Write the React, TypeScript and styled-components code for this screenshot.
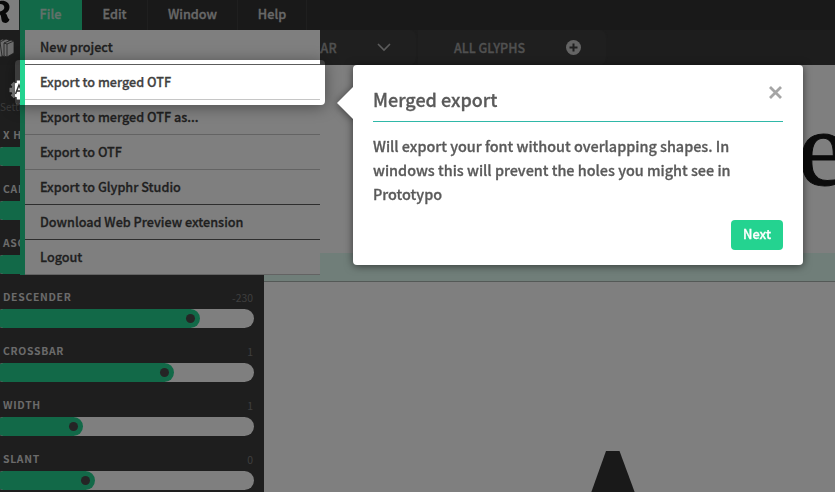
import React from "react";
import styled, { createGlobalStyle } from "styled-components";

const Global = createGlobalStyle`
  * { box-sizing: border-box; }
  html, body { margin: 0; padding: 0; overflow: hidden; }
  body { font-family: "Noto Sans CJK JP", "Noto Sans", sans-serif; font-weight: 500; background: #fff; }
`;

const Screen = styled.div`
  position: relative;
  display: flex;
  flex-direction: column;
  width: 835px;
  height: 492px;
  overflow: hidden;
  background: #fff;
  -webkit-text-stroke: 0.3px currentColor;
`;

const TopBar = styled.header`
  display: flex;
  flex: none;
  height: 30px;
  background: #333;
`;

const LogoBox = styled.div`
  width: 20px;
  height: 30px;
  background: #fdfdfd;
  border-right: 1px solid #2c4a3e;
`;

const MenuTitle = styled.div<{ $width: number; $active?: boolean }>`
  width: ${(p) => p.$width}px;
  height: 30px;
  line-height: 27px;
  text-align: center;
  font-size: 12.7px;
  color: ${(p) => (p.$active ? "#c4e2d5" : "#d0d0d0")};
  background: ${(p) => (p.$active ? "#24d390" : "transparent")};
  border-right: 1px solid ${(p) => (p.$active ? "#24d390" : "#3f3f3f")};
`;

const Toolbar = styled.div`
  display: flex;
  flex: none;
  height: 35px;
  background: #3a3a3a;
  color: #a0a0a0;
  font-size: 12.5px;
  line-height: 38px;
`;

const LibraryCell = styled.div`
  width: 20px;
  height: 35px;
`;

const Tab = styled.div<{ $width: number }>`
  display: flex;
  align-items: center;
  justify-content: space-between;
  width: ${(p) => p.$width}px;
  height: 35px;
  padding: 0 25px 0 36px;
  background: #3e3e3e;
  border-right: 2px solid #3a3a3a;
  border-radius: 0 8px 8px 0;
  svg { display: block; }
`;

const FamilyName = styled.span`
  margin-left: 224px;
`;

const Main = styled.div`
  display: flex;
  flex: 1;
  min-height: 0;
`;

const Side = styled.aside`
  flex: none;
  width: 264px;
  background: #3c3c3c;
`;

const Settings = styled.div`
  height: 62px;
  padding-top: 15px;
  font-size: 10px;
  line-height: 12px;
  font-weight: 400;
  color: #777;
  white-space: nowrap;
  overflow: hidden;
  -webkit-text-stroke: 0;
  svg { display: block; margin: 0 0 1px 9px; }
`;

const SliderBlock = styled.div`
  height: 54px;
  width: 254px;
`;

const SliderHead = styled.div`
  display: flex;
  justify-content: space-between;
  height: 20px;
  padding: 0 0 0 3px;
  line-height: 16px;
  font-size: 10.4px;
  font-weight: 700;
  letter-spacing: 0.7px;
  color: #d6d6d6;
  -webkit-text-stroke: 0;
`;

const SliderValue = styled.span`
  font-size: 10.4px;
  font-weight: 400;
  letter-spacing: 0;
  line-height: 18px;
  padding-right: 1px;
  color: #7c7c7c;
`;

const Track = styled.div`
  height: 19px;
  margin-left: -6px;
  border-radius: 10px;
  background: #fff;
  overflow: hidden;
`;

const Fill = styled.div<{ $end: number }>`
  display: flex;
  align-items: center;
  justify-content: flex-end;
  width: ${(p) => p.$end + 6}px;
  height: 19px;
  padding-right: 5px;
  border-radius: 10px;
  background: #24d390;
`;

const Knob = styled.span`
  width: 9px;
  height: 9px;
  border-radius: 50%;
  background: #4a4a4a;
`;

const Stage = styled.main`
  display: flex;
  flex-direction: column;
  flex: 1;
  overflow: hidden;
`;

const WordView = styled.div`
  flex: none;
  height: 188px;
  padding-left: 534px;
  font-family: "Liberation Serif", serif;
  font-weight: 400;
  font-size: 109px;
  line-height: 167px;
  color: #161616;
  overflow: hidden;
  -webkit-text-stroke: 1px currentColor;
`;

const InputBand = styled.div`
  flex: none;
  height: 29px;
  background: #e0fcf3;
  border-bottom: 1px solid #a8b2ae;
`;

const GlyphCanvas = styled.div`
  flex: none;
  padding: 169px 0 0 327px;
`;

const GlyphTop = styled.div`
  width: 44px;
  height: 42px;
  background: #333;
  clip-path: polygon(15px 0, 28.5px 0, 44px 42px, 0 42px);
`;

const Dropdown = styled.nav`
  position: absolute;
  left: 20px;
  top: 30px;
  width: 300px;
  border-left: 5px solid #24d390;
  background: #fff;
`;

const MenuItem = styled.div<{ $strong?: boolean }>`
  height: 35px;
  padding-left: 15px;
  line-height: 34px;
  font-size: 12.65px;
  color: #3f3f3f;
  white-space: nowrap;
  border-bottom: 1px solid ${(p) => (p.$strong ? "#5c5c5c" : "#c6c6c6")};
`;

const Spotlight = styled.div`
  position: absolute;
  left: 15px;
  top: 60px;
  width: 310px;
  height: 45px;
  border-radius: 4px;
  box-shadow: 0 2px 15px rgba(0, 0, 0, 0.4), 0 0 0 1000px rgba(0, 0, 0, 0.5);
`;

const Popover = styled.section`
  position: absolute;
  left: 353px;
  top: 65px;
  width: 450px;
  height: 200px;
  display: flex;
  flex-direction: column;
  padding: 20px 20px 15px;
  border-radius: 4px;
  background: #fff;
  color: #5a5a5a;
  filter: drop-shadow(0 1px 4px rgba(0, 0, 0, 0.55));
  &::before {
    content: "";
    position: absolute;
    left: -16px;
    top: 22px;
    border: 16px solid transparent;
    border-left: 0;
    border-right-color: #fff;
  }
`;

const PopHeader = styled.div`
  display: flex;
  flex: none;
  justify-content: space-between;
  height: 37px;
  border-bottom: 1px solid #2fb8a8;
  svg { margin: 1px 1px 0 0; }
`;

const PopTitle = styled.h1`
  margin: 0;
  font-size: 18px;
  font-weight: 500;
  line-height: 29px;
`;

const PopBody = styled.p`
  flex: 1;
  margin: 12px 0 0;
  font-size: 14.42px;
  line-height: 24px;
  white-space: pre-line;
`;

const NextButton = styled.button`
  align-self: flex-end;
  width: 52px;
  height: 30px;
  padding: 0 0 2px;
  border: 0;
  border-radius: 4px;
  background: #24d390;
  color: #fff;
  font: 500 12.8px/28px "Noto Sans CJK JP", sans-serif;
  -webkit-text-stroke: 0.3px #fff;
`;

const menu = [
  { label: "New project", strong: true },
  { label: "Export to merged OTF" },
  { label: "Export to merged OTF as..." },
  { label: "Export to OTF" },
  { label: "Export to Glyphr Studio", strong: true },
  { label: "Download Web Preview extension", strong: true },
  { label: "Logout" },
];

const sliders = [
  { label: "X HEIGHT", value: "500", end: 150 },
  { label: "CAPITAL", value: "250", end: 150 },
  { label: "ASCENDER", value: "250", end: 150 },
  { label: "DESCENDER", value: "-230", end: 200 },
  { label: "CROSSBAR", value: "1", end: 174 },
  { label: "WIDTH", value: "1", end: 83 },
  { label: "SLANT", value: "0", end: 95 },
];

const teeth = [0, 45, 90, 135, 180, 225, 270, 315];

export default function App() {
  return (
    <Screen>
      <Global />
      <TopBar>
        <LogoBox>
          <svg width="19" height="30" viewBox="0 0 19 30">
            <path d="M0 1C5 0 9.5 2.5 9.5 7C9.5 10 8 12 5.5 13.2C7.5 14.5 7 17.5 9.5 19.5C8.5 22.5 6 23.5 3.5 22.5C0.5 21.5 2 16 0 14.5V11.5C3 11 4.5 9 4.3 7C4 5 2.5 4 0 4Z" fill="#111" />
          </svg>
        </LogoBox>
        <MenuTitle $width={62} $active>File</MenuTitle>
        <MenuTitle $width={66}>Edit</MenuTitle>
        <MenuTitle $width={90}>Window</MenuTitle>
        <MenuTitle $width={69}>Help</MenuTitle>
      </TopBar>
      <Toolbar>
        <LibraryCell>
          <svg width="20" height="35" viewBox="0 0 20 35" fill="#d8d8d8" stroke="#3a3a3a" strokeWidth=".8">
            <path d="M-3 13l5-4 4 1v14l-5 3-4-1z" />
            <path d="M0 12l6-3 3 1v14l-4 3-3-1z" />
            <path d="M4 13l7-3 3 1v12l-7 4-3-1z" />
            <path d="M4 13l3 1v13M7 14l7-3" fill="none" />
          </svg>
        </LibraryCell>
        <Tab $width={398}>
          <FamilyName>REGULAR</FamilyName>
          <svg width="14" height="9" viewBox="0 0 14 9" fill="none" stroke="#b8b8b8" strokeWidth="1.6">
            <path d="M1 1l6 6 6-6" />
          </svg>
        </Tab>
        <Tab $width={190}>
          <span>ALL GLYPHS</span>
          <svg width="15" height="15" viewBox="0 0 15 15">
            <circle cx="7.5" cy="7.5" r="7.5" fill="#c8c8c8" />
            <path d="M7.5 3.5v8M3.5 7.5h8" stroke="#3e3e3e" strokeWidth="2" />
          </svg>
        </Tab>
      </Toolbar>
      <Main>
        <Side>
          <Settings>
            <svg width="20" height="20" viewBox="0 0 20 20">
              <circle cx="10" cy="10" r="7.6" fill="#fff" />
              {teeth.map((a) => (
                <rect key={a} x="7.8" y="0.5" width="4.4" height="4" fill="#fff" transform={`rotate(${a} 10 10)`} />
              ))}
              <path d="M6.5 14l3.5-9 3.5 9M7.5 11h5" fill="none" stroke="#333" strokeWidth="1.4" />
            </svg>
            Settings
          </Settings>
          {sliders.map((s) => (
            <SliderBlock key={s.label}>
              <SliderHead>
                {s.label}
                <SliderValue>{s.value}</SliderValue>
              </SliderHead>
              <Track>
                <Fill $end={s.end}><Knob /></Fill>
              </Track>
            </SliderBlock>
          ))}
        </Side>
        <Stage>
          <WordView>e</WordView>
          <InputBand />
          <GlyphCanvas><GlyphTop /></GlyphCanvas>
        </Stage>
      </Main>
      <Dropdown>
        {menu.map((m) => (
          <MenuItem key={m.label} $strong={m.strong}>{m.label}</MenuItem>
        ))}
      </Dropdown>
      <Spotlight />
      <Popover>
        <PopHeader>
          <PopTitle>Merged export</PopTitle>
          <svg width="13" height="13" viewBox="0 0 13 13" stroke="#a5a5a5" strokeWidth="2.8">
            <path d="M1 1l11 11M12 1L1 12" />
          </svg>
        </PopHeader>
        <PopBody>{"Will export your font without overlapping shapes. In\nwindows this will prevent the holes you might see in\nPrototypo"}</PopBody>
        <NextButton>Next</NextButton>
      </Popover>
    </Screen>
  );
}
